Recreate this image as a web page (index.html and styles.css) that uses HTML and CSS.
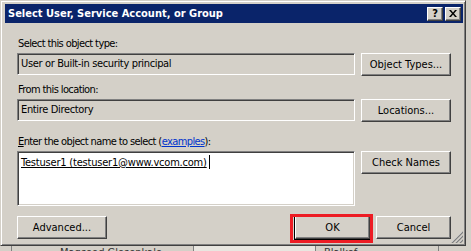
FILE: index.html
```html
<!DOCTYPE html>
<html>
<head>
<meta charset="utf-8">
<title>Select User, Service Account, or Group</title>
<link rel="stylesheet" href="styles.css">
</head>
<body>
<div class="dialog">
	<div class="caption">
		<span class="caption-text">Select User, Service Account, or Group</span>
		<span class="caption-buttons">
			<span class="capbtn help">?</span>
			<span class="capbtn close">
				<svg width="8" height="7" viewBox="0 0 8 7"><path d="M0 0h2l2 2.5 2-2.5h2L5 3.5 8 7H6L4 4.5 2 7H0l3-3.5z" fill="#000"/></svg>
			</span>
		</span>
	</div>
	<div class="client">
		<div class="form">
			<div class="label label-first">Select this object type:</div>
			<div class="field">User or Built-in security principal</div>
			<button class="btn">Object Types...</button>

			<div class="label">From this location:</div>
			<div class="field">Entire Directory</div>
			<button class="btn">Locations...</button>

			<div class="label label-names"><u>E</u>nter the object name to select (<a href="#">examples</a>):</div>
			<div class="field field-names"><span class="entry">Testuser1 (testuser1@www.vcom.com)</span><span class="caret"></span></div>
			<button class="btn">Check Names</button>
		</div>
		<div class="actions">
			<button class="btn">Advanced...</button>
			<span class="spacer"></span>
			<button class="btn btn-small btn-default">OK</button>
			<button class="btn btn-small">Cancel</button>
		</div>
		<!-- resize grip in the corner -->
		<svg class="grip" width="12" height="12" viewBox="0 0 12 12">
			<path d="M11 1L1 11M11 5L5 11M11 9L9 11" stroke="#fff" stroke-width="1"/>
			<path d="M12 1L1 12M12 5L5 12M12 9L9 12" stroke="#808080" stroke-width="1.4"/>
		</svg>
	</div>
</div>
<div class="behind">
	<span class="cell cell-edge"></span>
	<span class="cell cell-name">Maqsood Glosenkalo</span>
	<span class="cell cell-gap"></span>
	<span class="cell cell-type">Blalkof</span>
	<span class="cell cell-rest"></span>
</div>
</body>
</html>
```

FILE: styles.css
```css
/* Windows classic look: #d4d0c8 face, #808080 shadow, #404040 dark shadow */

* {
	box-sizing: border-box;
}
html, body {
	margin: 0;
	height: 251px;
	overflow: hidden;
}
body {
	background: #d4d0c8;
	font-family: "DejaVu Sans Condensed", "DejaVu Sans", sans-serif;
	font-size: 11px;
	color: #000;
}

/* Window frame */
.dialog {
	position: relative;
	width: 466px;
	height: 246px;
	padding: 2px 2px 2px 4px;
	background: #d4d0c8;
	border: 1px solid;
	border-color: #d4d0c8 #404040 #404040 #d4d0c8;
	box-shadow: inset 1px 1px #fff, inset -1px -1px #808080;
}

.caption {
	display: flex;
	align-items: center;
	justify-content: space-between;
	height: 19px;
	margin-top: 1px;
	padding: 0 2px 0 3px;
	background: #0a246a;
	color: #fff;
}
.caption-text {
	font-weight: bold;
	font-size: 11px;
}
.caption-buttons {
	display: flex;
	gap: 2px;
}
.capbtn {
	display: flex;
	align-items: center;
	justify-content: center;
	width: 16px;
	height: 14px;
	background: #d4d0c8;
	color: #000;
	border: 1px solid;
	border-color: #fff #404040 #404040 #fff;
	box-shadow: inset -1px -1px #808080;
	font-weight: bold;
	font-size: 11px;
	line-height: 1;
}

/* Client area */
.client {
	padding: 0 0 0 12px;
}
.form {
	display: grid;
	grid-template-columns: 338px 90px;
	column-gap: 6px;
}
.label {
	grid-column: 1 / -1;
	line-height: 13px;
	margin: 7px 0 3px 1px;
	letter-spacing: -0.6px;
}
.label-first {
	margin-top: 14px;
}
.label-names {
	margin-top: 13px;
}
.label a {
	color: #0033cc;
}

.field {
	height: 22px;
	padding: 0 3px;
	line-height: 20px;
	letter-spacing: -0.35px;
	background: #d4d0c8;
	border: 1px solid;
	border-color: #808080 #fff #fff #808080;
	box-shadow: inset 1px 1px #404040, inset -1px -1px #d4d0c8;
	white-space: nowrap;
}
.field-names {
	height: 55px;
	background: #fff;
	line-height: 18px;
	padding-top: 2px;
	letter-spacing: -0.2px;
}
.entry {
	text-decoration: underline;
}
.caret {
	display: inline-block;
	width: 1px;
	height: 14px;
	margin-left: 2px;
	vertical-align: -3px;
	background: #000;
}

.btn {
	align-self: start;
	width: 90px;
	height: 23px;
	padding: 0;
	font: inherit;
	color: #000;
	background: #d4d0c8;
	border: 1px solid;
	border-color: #fff #404040 #404040 #fff;
	box-shadow: inset -1px -1px #808080;
}
.btn-small {
	width: 75px;
}
.btn-default {
	position: relative;
	outline: 1px solid #000;
}
/* red highlight drawn over the screenshot */
.btn-default::after {
	content: "";
	position: absolute;
	left: -6px;
	right: -4px;
	top: -3px;
	bottom: -5px;
	border: 3px solid #ed1c24;
}

.actions {
	display: flex;
	gap: 6px;
	width: 434px;
	margin-top: 10px;
}
.spacer {
	flex: 1;
}

.grip {
	position: absolute;
	right: 2px;
	bottom: 2px;
}

/* Strip of the window lying behind the dialog */
.behind {
	display: flex;
	height: 5px;
	overflow: hidden;
	color: #333;
}
.cell {
	display: block;
	padding-left: 4px;
	line-height: 13px;
	white-space: nowrap;
	border-left: 1px solid #808080;
}
.cell-edge {
	width: 11px;
	border-left: 0;
}
.cell-name {
	width: 182px;
	padding-left: 48px;
}
.cell-gap {
	width: 122px;
	background: #e8e6e0;
}
.cell-type {
	width: 123px;
	padding-left: 8px;
}
.cell-rest {
	flex: 1;
}
```
